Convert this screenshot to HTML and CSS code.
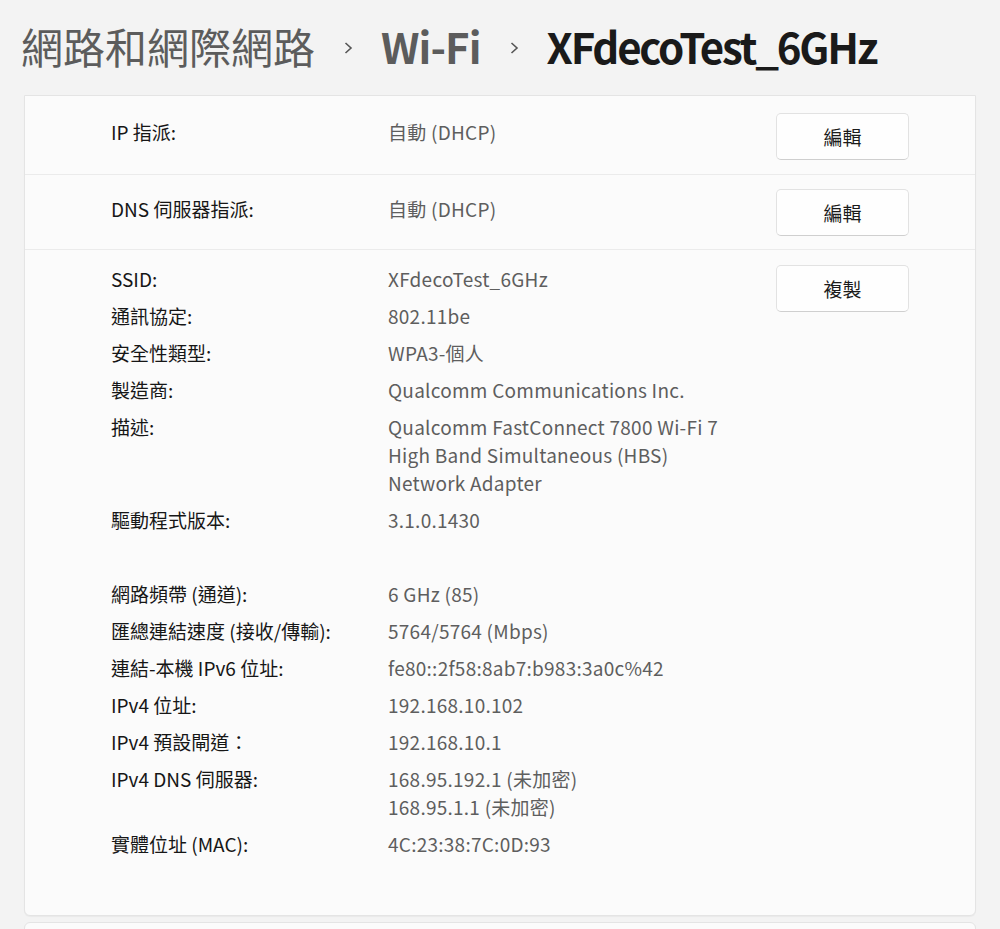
FILE: index.html
```html
<!DOCTYPE html>
<html lang="zh-Hant">
<head>
<meta charset="utf-8">
<link rel="stylesheet" href="styles.css">
</head>
<body>
<header class="crumbs">
  <span class="crumb muted">網路和網際網路</span>
  <svg class="chev" viewBox="0 0 12 16" width="12" height="16"><path d="M3.5 3 L9 8 L3.5 13" fill="none" stroke="#555" stroke-width="1.6"/></svg>
  <span class="crumb muted semi">Wi-Fi</span>
  <svg class="chev" viewBox="0 0 12 16" width="12" height="16"><path d="M3.5 3 L9 8 L3.5 13" fill="none" stroke="#555" stroke-width="1.6"/></svg>
  <span class="crumb semi dark tight">XFdecoTest_6GHz</span>
</header>

<section class="card">
  <div class="row row-a">
    <div class="label">IP 指派:</div>
    <div class="value">自動 (DHCP)</div>
    <button class="btn">編輯</button>
  </div>
  <div class="row row-b">
    <div class="label">DNS 伺服器指派:</div>
    <div class="value">自動 (DHCP)</div>
    <button class="btn">編輯</button>
  </div>
  <div class="row row-c">
    <dl class="props">
      <dt>SSID:</dt><dd>XFdecoTest_6GHz</dd>
      <dt>通訊協定:</dt><dd>802.11be</dd>
      <dt>安全性類型:</dt><dd>WPA3-個人</dd>
      <dt>製造商:</dt><dd>Qualcomm Communications Inc.</dd>
      <dt>描述:</dt><dd>Qualcomm FastConnect 7800 Wi-Fi 7<br>High Band Simultaneous (HBS)<br>Network Adapter</dd>
      <dt>驅動程式版本:</dt><dd>3.1.0.1430</dd>
      <dt class="spacer"></dt><dd class="spacer"></dd>
      <dt>網路頻帶 (通道):</dt><dd>6 GHz (85)</dd>
      <dt>匯總連結速度 (接收/傳輸):</dt><dd>5764/5764 (Mbps)</dd>
      <dt>連結-本機 IPv6 位址:</dt><dd>fe80::2f58:8ab7:b983:3a0c%42</dd>
      <dt>IPv4 位址:</dt><dd>192.168.10.102</dd>
      <dt>IPv4 預設閘道：</dt><dd>192.168.10.1</dd>
      <dt>IPv4 DNS 伺服器:</dt><dd>168.95.192.1 (未加密)<br>168.95.1.1 (未加密)</dd>
      <dt>實體位址 (MAC):</dt><dd>4C:23:38:7C:0D:93</dd>
    </dl>
    <button class="btn">複製</button>
  </div>
</section>

<section class="card next"></section>
</body>
</html>
```

FILE: styles.css
```css
html, body {
  margin: 0;
  padding: 0;
  background: #f3f3f3;
  font-family: "Noto Sans CJK TC", "Noto Sans", sans-serif;
  color: #1b1b1b;
  overflow: hidden;
}

.crumbs {
  height: 95px;
  display: flex;
  align-items: center;
  gap: 27px;
  padding-left: 21px;
  padding-bottom: 4px;
  box-sizing: border-box;
}

.crumb {
  font-size: 42px;
  line-height: 1;
  white-space: nowrap;
}

.muted { color: #5c5c5c; }
.semi { font-weight: 600; letter-spacing: -0.9px; }
.dark { color: #1a1a1a; }
.tight { letter-spacing: -2.2px; }

.chev {
  display: block;
  margin-top: 4px;
}

.card {
  margin: 0 24px;
  background: #fbfbfb;
  border: 1px solid #e4e4e4;
  border-radius: 0 0 6px 6px;
  box-shadow: 0 1px 1px rgba(0,0,0,0.04);
}

.card.next {
  margin-top: 6px;
  height: 40px;
  border-radius: 6px 6px 0 0;
}

.row {
  display: flex;
  align-items: center;
  padding: 0 66px 0 86px;
  font-size: 19px;
}

.row + .row {
  border-top: 1px solid #ebebeb;
}

.row-a { height: 78px; padding-top: 2px; box-sizing: border-box; }
.row-b { height: 75px; padding-top: 1px; box-sizing: border-box; }

.row-a .label, .row-a .value,
.row-b .label, .row-b .value {
  padding-bottom: 9px;
}

.row-c {
  align-items: flex-start;
  padding-top: 15px;
  padding-bottom: 57px;
}

.label {
  width: 277px;
  color: #161616;
}

.value {
  flex: 1;
  color: #5e5e5e;
  letter-spacing: 0.25px;
}

.btn {
  width: 133px;
  height: 47px;
  flex: none;
  background: #fefefe;
  border: 1px solid #e2e2e2;
  border-bottom-color: #cfcfcf;
  border-radius: 5px;
  font-family: inherit;
  font-size: 19px;
  color: #1b1b1b;
  padding: 0;
}

.props {
  flex: 1;
  margin: 0;
  display: grid;
  grid-template-columns: 277px 1fr;
  row-gap: 9px;
  line-height: 28px;
}

.props dt {
  margin: 0;
  color: #161616;
  white-space: nowrap;
}

.props dd {
  margin: 0;
  color: #5e5e5e;
  letter-spacing: 0.25px;
}

.props .spacer {
  height: 28px;
}
```
